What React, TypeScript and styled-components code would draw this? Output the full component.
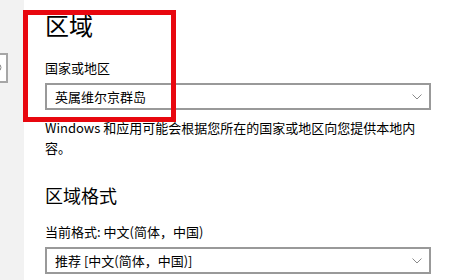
import React from "react";
import styled, { createGlobalStyle } from "styled-components";

const Global = createGlobalStyle`
  html, body { margin: 0; padding: 0; background: #ffffff; }
  body { width: 450px; height: 280px; overflow: hidden; }
  * { box-sizing: border-box; }
`;

const Page = styled.div`
  position: relative;
  width: 450px;
  height: 280px;
  display: flex;
  font-family: "Noto Sans CJK SC", "Noto Sans", sans-serif;
  color: #000;
  overflow: hidden;
  background: #fff;
`;

const Sidebar = styled.aside`
  width: 24px;
  flex: none;
  background: #f2f2f2;
  padding-top: 53px;
`;

const SearchBox = styled.div`
  width: 40px;
  height: 30px;
  margin-left: -32px;
  background: #fff;
  border: 2px solid #a6a6a6;
  display: flex;
  align-items: center;
  justify-content: flex-end;
  padding-right: 4px;
`;

const Main = styled.main`
  flex: 1;
  padding: 13px 0 0 21px;
  display: flex;
  flex-direction: column;
  align-items: flex-start;
`;

const Title = styled.h1`
  margin: 0;
  font-size: 24px;
  line-height: 24px;
  font-weight: 400;
`;

const SubTitle = styled.h2`
  margin: 25px 0 0;
  font-size: 18px;
  line-height: 24px;
  font-weight: 400;
`;

const Label = styled.div<{ $top: number }>`
  margin-top: ${(p) => p.$top}px;
  font-size: 13px;
  line-height: 18px;
`;

const Select = styled.div`
  margin-top: 6px;
  width: 386px;
  height: 27px;
  border: 2px solid #999999;
  background: #fff;
  display: flex;
  align-items: center;
  justify-content: space-between;
  padding: 0 7px 0 8px;
  font-size: 13px;
`;

const Paragraph = styled.p`
  margin: 8px 0 0;
  width: 386px;
  font-size: 13px;
  line-height: 20px;
`;

const Highlight = styled.div`
  position: absolute;
  left: 23px;
  top: 10px;
  width: 153px;
  height: 112px;
  border: 5px solid #e8070f;
  pointer-events: none;
`;

const Chevron = () => (
  <svg width="10" height="6" viewBox="0 0 10 6" fill="none">
    <polyline points="0.5,0.5 5,5 9.5,0.5" stroke="#8a8a8a" strokeWidth="1" />
  </svg>
);

const SearchIcon = () => (
  <svg width="10" height="10" viewBox="0 0 10 10" fill="none">
    <circle cx="5.5" cy="4.5" r="3.5" stroke="#888" strokeWidth="1" />
    <line x1="3" y1="7" x2="0.5" y2="9.5" stroke="#888" strokeWidth="1" />
  </svg>
);

export default function App() {
  return (
    <>
      <Global />
      <Page>
        <Sidebar>
          <SearchBox>
            <SearchIcon />
          </SearchBox>
        </Sidebar>
        <Main>
          <Title>区域</Title>
          <Label $top={22}>国家或地区</Label>
          <Select>
            <span>英属维尔京群岛</span>
            <Chevron />
          </Select>
          <Paragraph>
            Windows 和应用可能会根据您所在的国家或地区向您提供本地内容。
          </Paragraph>
          <SubTitle>区域格式</SubTitle>
          <Label $top={16}>当前格式: 中文(简体，中国)</Label>
          <Select>
            <span>推荐 [中文(简体，中国)]</span>
            <Chevron />
          </Select>
        </Main>
        <Highlight />
      </Page>
    </>
  );
}
